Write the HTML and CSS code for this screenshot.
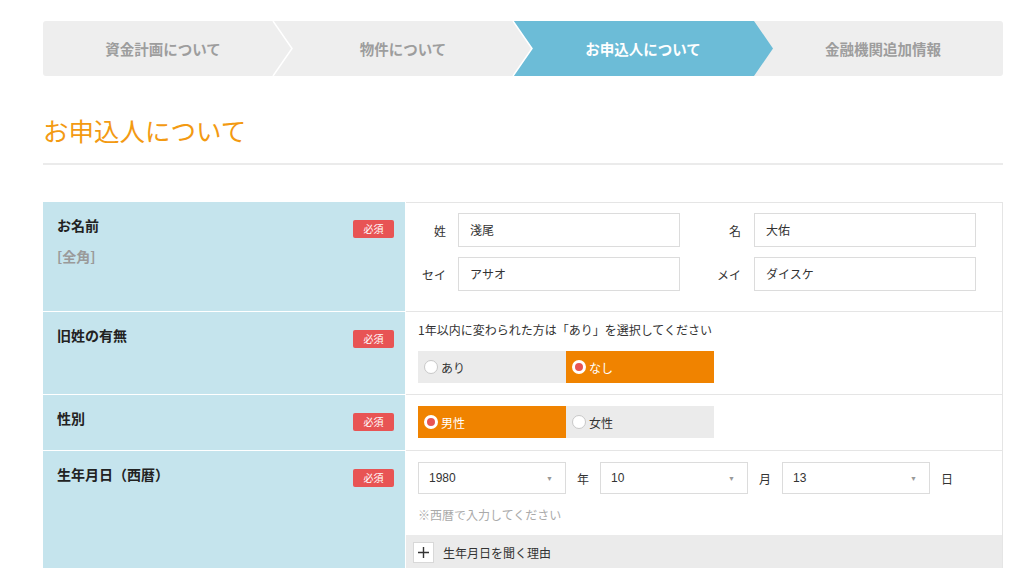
FILE: index.html
```html
<!DOCTYPE html>
<html lang="ja">
<head>
<meta charset="utf-8">
<title>お申込人について</title>
<link rel="stylesheet" href="styles.css">
</head>
<body>
<div class="page">
  <ol class="steps">
    <li class="step">資金計画について<svg class="sep" width="22" height="55" viewBox="0 0 22 55"><polyline points="1,0 20,27.5 1,55" fill="none" stroke="#fff" stroke-width="1.5"/></svg></li>
    <li class="step">物件について<svg class="sep" width="22" height="55" viewBox="0 0 22 55"><polyline points="1,0 20,27.5 1,55" fill="none" stroke="#fff" stroke-width="1.5"/></svg></li>
    <li class="step active"><span class="step-bg"></span><span class="step-text">お申込人について</span></li>
    <li class="step">金融機関追加情報</li>
  </ol>

  <h1 class="title">お申込人について</h1>

  <div class="form">
    <div class="row">
      <div class="label">
        <div class="label-main"><span class="label-text">お名前</span><span class="badge">必須</span></div>
        <div class="label-sub">[全角]</div>
      </div>
      <div class="value value-name">
        <div class="name-grid">
          <span class="nlabel">姓</span><div class="input">淺尾</div>
          <span class="nlabel wide">名</span><div class="input">大佑</div>
          <span class="nlabel">セイ</span><div class="input">アサオ</div>
          <span class="nlabel wide">メイ</span><div class="input">ダイスケ</div>
        </div>
      </div>
    </div>

    <div class="row">
      <div class="label">
        <div class="label-main"><span class="label-text">旧姓の有無</span><span class="badge">必須</span></div>
      </div>
      <div class="value value-prev">
        <p class="note">1年以内に変わられた方は「あり」を選択してください</p>
        <div class="radios">
          <div class="radio"><span class="dot"></span>あり</div>
          <div class="radio on"><span class="dot"></span>なし</div>
        </div>
      </div>
    </div>

    <div class="row">
      <div class="label">
        <div class="label-main"><span class="label-text">性別</span><span class="badge">必須</span></div>
      </div>
      <div class="value value-sex">
        <div class="radios">
          <div class="radio on"><span class="dot"></span>男性</div>
          <div class="radio"><span class="dot"></span>女性</div>
        </div>
      </div>
    </div>

    <div class="row">
      <div class="label">
        <div class="label-main"><span class="label-text">生年月日（西暦）</span><span class="badge">必須</span></div>
      </div>
      <div class="value value-birth">
        <div class="birth">
          <div class="select"><span>1980</span><span class="arrow">▼</span></div>
          <span class="unit">年</span>
          <div class="select"><span>10</span><span class="arrow">▼</span></div>
          <span class="unit">月</span>
          <div class="select"><span>13</span><span class="arrow">▼</span></div>
          <span class="unit">日</span>
        </div>
        <p class="hint">※西暦で入力してください</p>
        <div class="reason"><span class="plus"><svg width="11" height="11" viewBox="0 0 11 11"><path d="M5.5 0v11M0 5.5h11" stroke="#333" stroke-width="1.4"/></svg></span>生年月日を聞く理由</div>
      </div>
    </div>
  </div>
</div>
</body>
</html>
```

FILE: styles.css
```css
* { box-sizing: border-box; }
html, body { margin: 0; padding: 0; background: #fff; }
body {
  font-family: "Noto Sans CJK JP", "Noto Sans", "Liberation Sans", sans-serif;
  color: #333;
  overflow: hidden;
  height: 568px;
}
.page {
  width: 960px;
  margin: 0 0 0 43px;
  padding-top: 21px;
}
.steps {
  list-style: none;
  margin: 0;
  padding: 0;
  display: flex;
  height: 55px;
  background: #eeeeee;
  border-radius: 3px;
  overflow: hidden;
}
.step {
  position: relative;
  flex: 1 1 0;
  display: flex;
  align-items: center;
  justify-content: center;
  font-size: 14.5px;
  font-weight: bold;
  color: #9d9d9d;
}
.sep {
  position: absolute;
  top: 0;
  right: -11px;
  z-index: 2;
}
.step.active { color: #fff; }
.step-bg {
  position: absolute;
  top: 0;
  bottom: 0;
  left: -10px;
  right: -10px;
  background: #6cbcd7;
  clip-path: polygon(0 0, calc(100% - 19px) 0, 100% 50%, calc(100% - 19px) 100%, 0 100%, 19px 50%);
  z-index: 1;
}
.step-text { position: relative; z-index: 3; }

.title {
  margin: 37px 0 0;
  padding-bottom: 16px;
  font-size: 25.5px;
  line-height: 34px;
  font-weight: normal;
  color: #f39a12;
  border-bottom: 2px solid #ebebeb;
}

.form { margin-top: 37px; }
.row {
  display: grid;
  grid-template-columns: 363px 1fr;
}
.label {
  background: #c5e4ed;
  padding: 14px 11px 0 14px;
  border-bottom: 1px solid #fff;
  border-right: 1px solid #fff;
}
.label-main {
  display: flex;
  justify-content: space-between;
  align-items: flex-start;
}
.label-text {
  font-size: 14px;
  line-height: 18px;
  font-weight: bold;
  color: #222;
}
.badge {
  margin-top: 4px;
  width: 41px;
  height: 18px;
  background: #e85454;
  color: #fff;
  font-size: 10px;
  line-height: 18px;
  text-align: center;
  border-radius: 2px;
}
.label-sub {
  margin-top: 9px;
  font-size: 14px;
  line-height: 18px;
  font-weight: bold;
  color: #9a9a9a;
}
.value {
  border-right: 1px solid #e5e5e5;
  border-bottom: 1px solid #e5e5e5;
  padding: 11px 12px;
}
.row:first-child .value { border-top: 1px solid #e5e5e5; }

.value-name { padding: 10px 0 19px 12px; height: 110px; }
.name-grid {
  display: grid;
  grid-template-columns: 40px 222px 74px 222px;
  row-gap: 10px;
  align-items: center;
}
.nlabel {
  font-size: 12px;
  text-align: right;
  padding-right: 12px;
  color: #333;
}
.nlabel.wide { padding-right: 13px; }
.input {
  height: 34px;
  border: 1px solid #dcdcdc;
  font-size: 12px;
  line-height: 32px;
  padding-left: 11px;
  color: #333;
}

.note {
  margin: 0 0 12px;
  font-size: 12px;
  line-height: 18px;
  color: #333;
}
.value-prev { padding-top: 9px; height: 83px; }
.value-sex { height: 56px; }
.radios { display: flex; }
.radio {
  width: 148px;
  height: 32px;
  background: #ebebeb;
  display: flex;
  align-items: center;
  padding-left: 6px;
  font-size: 12px;
  color: #333;
}
.dot {
  width: 14px;
  height: 14px;
  border-radius: 50%;
  background: #fff;
  border: 1px solid #c8c8c8;
  margin-right: 3px;
}
.radio.on { background: #f08300; color: #fff; }
.radio.on .dot {
  border: 3px solid #fff;
  background: #e85454;
}

.value-birth { padding: 11px 0 0; }
.birth {
  display: flex;
  align-items: center;
  padding-left: 12px;
}
.select {
  width: 148px;
  height: 32px;
  border: 1px solid #dcdcdc;
  display: flex;
  justify-content: space-between;
  align-items: center;
  padding: 0 12px 0 10px;
  font-family: "Liberation Sans", Arial, sans-serif;
  font-size: 12px;
  color: #333;
}
.arrow { font-size: 7px; color: #999; }
.unit {
  width: 34px;
  text-align: center;
  font-size: 12px;
  color: #333;
}
.hint {
  margin: 12px 0 0 12px;
  font-size: 12px;
  line-height: 18px;
  color: #aaa;
}
.reason {
  margin-top: 11px;
  height: 34px;
  background: #ebebeb;
  display: flex;
  align-items: center;
  padding-left: 7px;
  font-size: 12px;
  color: #333;
}
.plus {
  width: 21px;
  height: 21px;
  background: #fff;
  border: 1px solid #d8d8d8;
  display: flex;
  align-items: center;
  justify-content: center;
  margin-right: 9px;
}
```
